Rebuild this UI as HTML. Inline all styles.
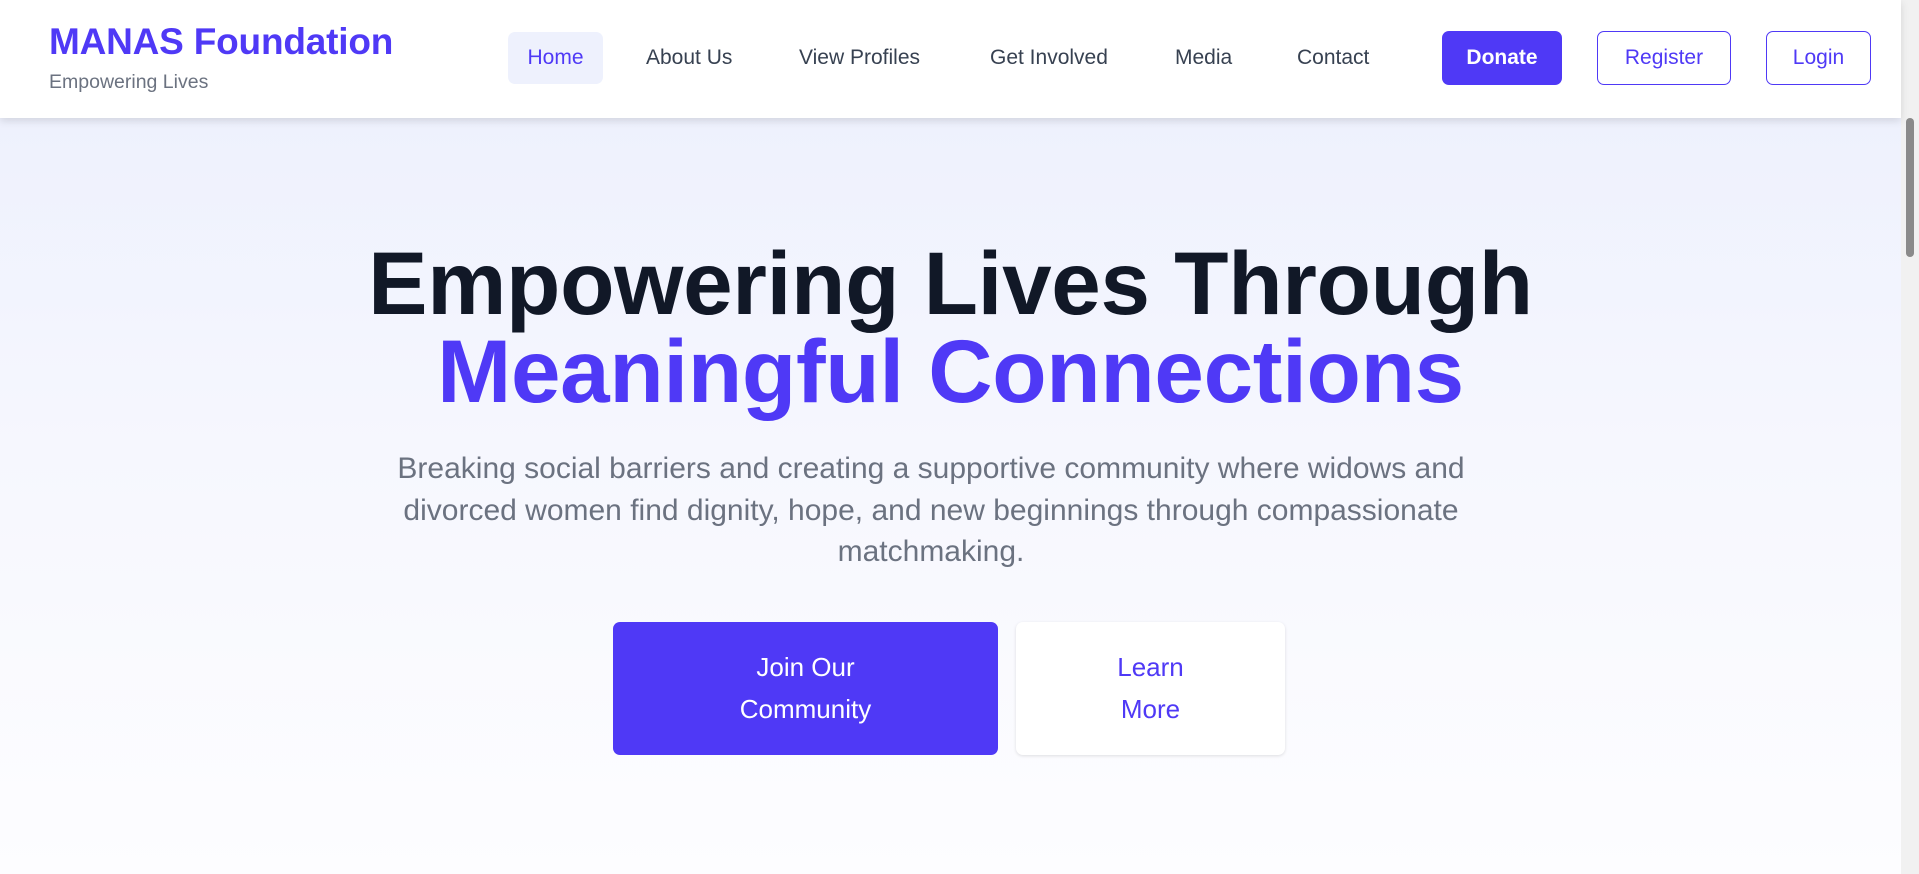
<!DOCTYPE html>
<html><head><meta charset="utf-8"><style>
*{margin:0;padding:0;box-sizing:border-box}
html,body{width:1919px;height:874px;overflow:hidden;font-family:"Liberation Sans",sans-serif}
body{background:linear-gradient(#eef1fd 118px,#f6f7fe 450px,#fdfdff 874px);position:relative}
header{position:absolute;left:0;top:0;width:1901px;height:118px;background:#fff;box-shadow:0 3px 8px rgba(0,0,0,.12);z-index:2}
.logo{position:absolute;left:49px;top:21px;font-size:37px;font-weight:bold;color:#4f39f6;letter-spacing:-.2px}
.sub{position:absolute;left:49px;top:71px;font-size:19.5px;color:#6b7280}
.nav{position:absolute;top:32px;height:52px;line-height:52px;font-size:21px;color:#374151}
.home{left:508px;width:95px;background:#eef1fd;border-radius:7px;color:#4f39f6;text-align:center}
.btn{position:absolute;top:31px;height:54px;line-height:52px;border-radius:7px;font-size:21px;text-align:center}
.donate{left:1442px;width:120px;background:#4f39f6;color:#fff;font-weight:bold;line-height:54px}
.reg{left:1597px;width:134px;border:1.5px solid #4f39f6;color:#4f39f6}
.log{left:1766px;width:105px;border:1.5px solid #4f39f6;color:#4f39f6}
.sb{position:absolute;right:0;top:0;width:18px;height:874px;background:#f1f1f1}
.th{position:absolute;right:5px;top:118px;width:8px;height:139px;background:#8a8a8a;border-radius:4px}
h1{position:absolute;left:0;width:1901px;top:239px;text-align:center;font-size:89px;line-height:88px;font-weight:bold;color:#111827;letter-spacing:-.3px}
h1 span{color:#4f39f6}
p{position:absolute;left:361px;width:1140px;top:448px;text-align:center;font-size:30px;line-height:41.5px;color:#6b7280}
.b{position:absolute;top:622px;height:133px;border-radius:7px;font-size:26px;line-height:42px;text-align:center;padding-top:24px}
.j{left:613px;width:385px;background:#4f39f6;color:#fff}
.l{left:1016px;width:269px;background:#fff;color:#4f39f6;box-shadow:0 1px 3px rgba(0,0,0,.12)}
</style></head><body>
<header>
<div class="logo">MANAS Foundation</div>
<div class="sub">Empowering Lives</div>
<div class="nav home">Home</div>
<div class="nav" style="left:646px">About Us</div>
<div class="nav" style="left:799px">View Profiles</div>
<div class="nav" style="left:990px">Get Involved</div>
<div class="nav" style="left:1175px">Media</div>
<div class="nav" style="left:1297px">Contact</div>
<div class="btn donate">Donate</div>
<div class="btn reg">Register</div>
<div class="btn log">Login</div>
</header>
<div class="sb"><div class="th"></div></div>
<h1>Empowering Lives Through<br><span>Meaningful Connections</span></h1>
<p>Breaking social barriers and creating a supportive community where widows and divorced women find dignity, hope, and new beginnings through compassionate matchmaking.</p>
<div class="b j">Join Our<br>Community</div>
<div class="b l">Learn<br>More</div>
</body></html>
